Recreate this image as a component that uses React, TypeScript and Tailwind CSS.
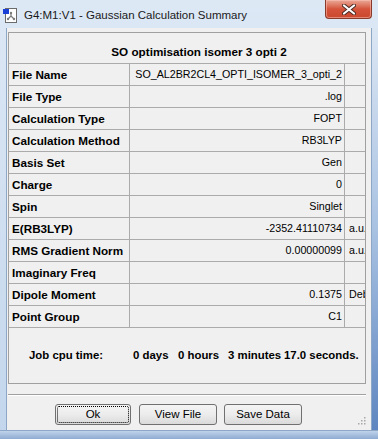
import React from "react";

const rows: [string, string, string][] = [
  ["File Name", "SO_AL2BR2CL4_OPTI_ISOMER_3_opti_2", ""],
  ["File Type", ".log", ""],
  ["Calculation Type", "FOPT", ""],
  ["Calculation Method", "RB3LYP", ""],
  ["Basis Set", "Gen", ""],
  ["Charge", "0", ""],
  ["Spin", "Singlet", ""],
  ["E(RB3LYP)", "-2352.41110734", "a.u."],
  ["RMS Gradient Norm", "0.00000099", "a.u."],
  ["Imaginary Freq", "", ""],
  ["Dipole Moment", "0.1375", "Debye"],
  ["Point Group", "C1", ""],
];

function AppIcon() {
  return (
    <svg width="15" height="15" viewBox="0 0 15 15">
      <rect x="2.5" y="0.5" width="11" height="14" fill="#fff" stroke="#6b6b6b" />
      <rect x="0" y="1" width="6" height="5" fill="#1a3fd6" />
      <path d="M8 5 L8 8 L5 11 M8 8 L11 11" stroke="#7a7a7a" strokeWidth="1.2" fill="none" />
      <circle cx="8" cy="5" r="1.2" fill="#7a7a7a" />
      <circle cx="5" cy="11" r="1.2" fill="#7a7a7a" />
      <circle cx="11" cy="11" r="1.2" fill="#7a7a7a" />
    </svg>
  );
}

function CloseButton() {
  return (
    <div className="flex h-[19px] w-[47px] items-center justify-center rounded-b-[4px] border border-t-0 border-[#8a3a2a] bg-gradient-to-b from-[#e9a898] via-[#d4533a] to-[#c9482e] shadow-[inset_0_0_0_1px_rgba(255,200,190,0.5)]">
      <svg width="14" height="11" viewBox="0 0 14 11">
        <path d="M2 1.5 L12 9.5 M12 1.5 L2 9.5" stroke="#4a2a24" strokeWidth="4" strokeLinecap="round" />
        <path d="M2 1.5 L12 9.5 M12 1.5 L2 9.5" stroke="#fff" strokeWidth="2.2" strokeLinecap="round" />
      </svg>
    </div>
  );
}

function Button({ label, focused, width }: { label: string; focused?: boolean; width: string }) {
  return (
    <div
      className={`relative flex h-[21px] ${width} items-center justify-center rounded-[3px] border border-[#707070] bg-gradient-to-b from-[#f4f4f4] via-[#ececec] to-[#dadada] text-[11.5px] text-black`}
    >
      {focused && <div className="absolute inset-[1px] rounded-[2px] border border-dotted border-black" />}
      {label}
    </div>
  );
}

export default function App() {
  return (
    <div className="flex h-[439px] w-[378px] flex-col overflow-hidden bg-gradient-to-b from-[#dde8f5] to-[#c3d6ec] font-['Liberation_Sans',Arial,sans-serif] text-black">
      <div className="flex h-[28px] shrink-0 items-start">
        <div className="ml-[3px] mt-[8px]">
          <AppIcon />
        </div>
        <div className="ml-[6px] mt-[8px] text-[11.5px] leading-[14px] text-[#1a1a1a]">
          G4:M1:V1 - Gaussian Calculation Summary
        </div>
        <div className="ml-auto mr-[6px]">
          <CloseButton />
        </div>
      </div>

      <div className="flex h-[402px] shrink-0">
        <div className="w-[7px] border-r border-[#8ea7c6]" />
        <div className="relative flex w-[364px] flex-col bg-[#f0f0f0]">
          <div className="ml-[1px] mt-[4px] flex h-[352px] w-[358px] flex-col overflow-hidden border border-[#a0a0a0]">
            <div className="flex h-[31px] shrink-0 items-end justify-center border-b border-[#ababab] pb-[4px] pl-[24px] text-[11.7px] font-bold leading-[15px]">
              SO optimisation isomer 3 opti 2
            </div>
            {rows.map(([label, value, unit]) => (
              <div key={label} className="flex h-[22px] shrink-0 border-b border-[#ababab]">
                <div className="flex w-[121px] shrink-0 items-center border-r border-[#ababab] pl-[3px] text-[11.7px] font-bold whitespace-nowrap">
                  {label}
                </div>
                <div className="flex w-[215px] shrink-0 items-center justify-end border-r border-[#ababab] pr-[2px] text-[10.7px] whitespace-nowrap">
                  {value}
                </div>
                <div className="flex w-[60px] shrink-0 items-center pl-[4px] text-[10.7px] whitespace-nowrap">
                  {unit}
                </div>
              </div>
            ))}
            <div className="flex pl-[20px] pt-[20px] text-[11.4px] font-bold leading-[15px] whitespace-nowrap">
              <span className="w-[104px] shrink-0">Job cpu time:</span>
              <span className="w-[45px] shrink-0">0 days</span>
              <span className="w-[50px] shrink-0">0 hours</span>
              <span className="w-[56px] shrink-0">3 minutes</span>
              <span className="shrink-0">17.0 seconds.</span>
            </div>
          </div>

          <div className="ml-[1px] mt-[10px] h-[2px] w-[358px] border-t border-b border-t-[#a0a0a0] border-b-white" />

          <div className="mt-[8px] flex">
            <div className="ml-[48px]">
              <Button label="Ok" focused width="w-[76px]" />
            </div>
            <div className="ml-[8px]">
              <Button label="View File" width="w-[78px]" />
            </div>
            <div className="ml-[7px]">
              <Button label="Save Data" width="w-[78px]" />
            </div>
          </div>

          <svg className="absolute bottom-[5px] right-[5px]" width="10" height="10" viewBox="0 0 10 10">
            {[
              [8, 2],
              [8, 5],
              [5, 5],
              [8, 8],
              [5, 8],
              [2, 8],
            ].map(([x, y]) => (
              <rect key={`${x}-${y}`} x={x} y={y} width="1.5" height="1.5" fill="#a8a8a8" />
            ))}
          </svg>
        </div>
        <div className="w-[7px] border-l border-[#8ea7c6] bg-gradient-to-b from-[#dbe6f3] via-[#a9c2e2] to-[#5f86c0]" />
      </div>

      <div className="flex-1 border-t border-[#8ea7c6] bg-gradient-to-b from-[#c0d3ea] to-[#8fabd2]" />
    </div>
  );
}
